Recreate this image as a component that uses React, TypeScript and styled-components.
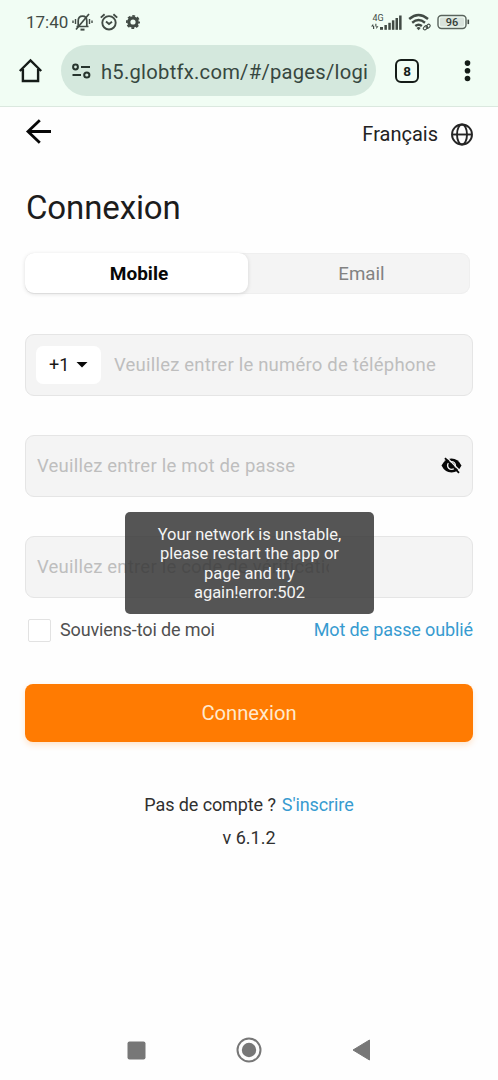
import React from "react";
import styled, { createGlobalStyle } from "styled-components";

const GlobalStyle = createGlobalStyle`
  * { box-sizing: border-box; }
  body { margin: 0; background: #fefefe; font-family: Roboto, "Liberation Sans", sans-serif; }
`;

const Screen = styled.div`
  position: relative;
  display: flex;
  flex-direction: column;
  width: 498px;
  height: 1080px;
  overflow: hidden;
  background: #fefefe;
`;

const BrowserHeader = styled.header`
  height: 107px;
  background: #f1fdf4;
  border-bottom: 1px solid #dbe8df;
`;

const StatusBar = styled.div`
  display: flex;
  justify-content: space-between;
  height: 45px;
  padding: 0 28px 0 26px;
`;

const StatusGroup = styled.div`
  display: flex;
  align-items: center;
  height: 44px;
`;

const Clock = styled.span`
  width: 46px;
  font-size: 17px;
  color: #424b45;
  white-space: nowrap;
`;

const AddressRow = styled.div`
  display: flex;
  align-items: center;
  height: 51px;
  padding: 0 24px 0 18px;
`;

const AddressPill = styled.div`
  display: flex;
  align-items: center;
  width: 315px;
  height: 51px;
  margin-left: 18px;
  padding: 0 9px 0 10px;
  border-radius: 26px;
  background: #d4e8dd;
`;

const Url = styled.span`
  flex: 1;
  margin-left: 9px;
  padding-top: 2px;
  overflow: hidden;
  white-space: nowrap;
  font-size: 20.2px;
  line-height: 28px;
  letter-spacing: 0.25px;
  color: #37473f;
`;

const TabCount = styled.div`
  display: flex;
  align-items: center;
  justify-content: center;
  width: 24px;
  height: 24px;
  margin: 0 0 0 19px;
  border: 2.8px solid #151c18;
  border-radius: 6px;
  font-size: 13.5px;
  font-weight: 700;
  color: #151c18;
`;

const Page = styled.main`
  display: flex;
  flex-direction: column;
  flex: 1;
  padding: 0 25px;
`;

const TopRow = styled.div`
  display: flex;
  justify-content: space-between;
  height: 55px;
`;

const Language = styled.div`
  display: flex;
  align-items: center;
  gap: 12px;
  height: 54px;
  font-size: 20px;
  color: #222;
`;

const Title = styled.h1`
  margin: 24px 0 0;
  height: 43px;
  padding-left: 1px;
  font-size: 33px;
  font-weight: 400;
  letter-spacing: -0.12px;
  line-height: 43px;
  color: #1c1c1c;
`;

const Tabs = styled.div`
  display: flex;
  width: 445px;
  height: 41px;
  margin-top: 24px;
  border-radius: 9px;
  background: #f4f4f4;
  box-shadow: inset 0 0 0 1px #efefef;
`;

const Tab = styled.div<{ $active?: boolean }>`
  display: flex;
  align-items: center;
  justify-content: center;
  width: ${(p) => (p.$active ? 223 : 222)}px;
  height: ${(p) => (p.$active ? 40 : 41)}px;
  padding-left: 5px;
  border-radius: 9px;
  font-size: ${(p) => (p.$active ? 19 : 18.7)}px;
  font-weight: ${(p) => (p.$active ? 700 : 400)};
  color: ${(p) => (p.$active ? "#080808" : "#828282")};
  background: ${(p) => (p.$active ? "#fff" : "transparent")};
  box-shadow: ${(p) => (p.$active ? "0 1px 4px rgba(0,0,0,0.13)" : "none")};
`;

const Field = styled.div<{ $gap: number }>`
  display: flex;
  align-items: center;
  height: 62px;
  margin-top: ${(p) => p.$gap}px;
  padding: 0 10px 1px;
  border: 1px solid #e5e5e5;
  border-radius: 9px;
  background: #f4f4f4;
`;

const Placeholder = styled.span<{ $inset: number; $width?: number }>`
  flex: ${(p) => (p.$width ? `0 0 ${p.$width}px` : "1")};
  overflow: hidden;
  margin-left: ${(p) => p.$inset}px;
  white-space: nowrap;
  font-size: 18.5px;
  letter-spacing: 0.21px;
  color: #bebebe;
`;

const DialCode = styled.div`
  display: flex;
  align-items: center;
  gap: 7px;
  width: 65px;
  height: 38px;
  padding-left: 13px;
  border-radius: 7px;
  background: #fff;
  font-size: 18px;
  color: #181818;
`;

const Options = styled.div`
  display: flex;
  align-items: center;
  height: 26px;
  margin-top: 19px;
  padding-left: 3px;
  font-size: 18px;
  letter-spacing: -0.12px;
  line-height: 25px;
  color: #505050;
  white-space: nowrap;
`;

const OptionLabel = styled.span`
  padding-bottom: 1px;
`;

const Checkbox = styled.span`
  width: 23px;
  height: 23px;
  margin-right: 9px;
  border: 1px solid #e2e2e2;
  border-radius: 2px;
  background: #fff;
`;

const Link = styled.a`
  color: #379bd0;
`;

const ForgotLink = styled(Link)`
  margin-left: auto;
  padding-bottom: 1px;
`;

const SubmitButton = styled.button`
  height: 58px;
  margin: 41px 0 0;
  padding: 0;
  border: 0;
  border-radius: 8px;
  background: #ff7b02;
  box-shadow: 0 3px 6px rgba(255, 123, 2, 0.2);
  font-family: inherit;
  font-size: 20.2px;
  color: #ffe9cd;
`;

const Signup = styled.div`
  display: flex;
  justify-content: center;
  gap: 6px;
  margin-top: 49px;
  font-size: 18px;
  letter-spacing: -0.1px;
  line-height: 27px;
  color: #303030;
`;

const Version = styled.div`
  margin-top: 7px;
  text-align: center;
  font-size: 18px;
  line-height: 26px;
  color: #303030;
`;

const SystemNav = styled.nav`
  display: flex;
  align-items: center;
  justify-content: space-between;
  height: 60px;
  padding: 0 127px;
`;

const Toast = styled.div`
  position: absolute;
  left: 125px;
  top: 512px;
  display: flex;
  flex-direction: column;
  align-items: center;
  width: 249px;
  height: 102px;
  padding-top: 13px;
  border-radius: 5px;
  background: rgba(50, 50, 50, 0.83);
  font-size: 16.5px;
  line-height: 19.4px;
  color: #f4f4f4;
  white-space: nowrap;
`;

const MutedBell = () => (
  <svg width="21" height="20" viewBox="0 0 21 20" fill="none" stroke="#424b45" strokeWidth="1.7">
    <path d="M4.5 14.5h12M6.2 14V9q0-4.8 4.3-4.8T14.8 9v5" />
    <path d="M8.5 17.6h4" strokeWidth="2" />
    <path d="M4 17.5 17 2" />
    <path d="M3.5 7v5M1 8.5v2.5M17.5 7v5M20 8.5v2.5" strokeWidth="1.4" />
  </svg>
);

const Alarm = () => (
  <svg width="18" height="18" viewBox="0 0 18 18" fill="none" stroke="#424b45" strokeWidth="1.9">
    <circle cx="9" cy="9.8" r="6.7" />
    <path d="M.8 4.6 4.6 1.3M17.2 4.6 13.4 1.3M6 8.5l3 2.5 3-2.3" />
  </svg>
);

const Gear = () => (
  <svg width="14" height="14" viewBox="0 0 14 14" fill="none" stroke="#424b45">
    <circle cx="7" cy="7" r="4.2" strokeWidth="3.2" />
    <circle cx="7" cy="7" r="6.1" strokeWidth="1.8" strokeDasharray="2.8 1.99" strokeDashoffset="1.4" />
  </svg>
);

const Signal = () => (
  <svg width="33" height="20" viewBox="0 0 33 20" fill="#424b45">
    <text x="1.5" y="8.5" fontSize="9" fontFamily="Roboto, sans-serif">4G</text>
    <path d="m0 14.5 2.2-2.7v2h1V17H2v-2.5zM7.5 14.2 5.3 17v-2.5h-1v-2.7h1.1v2.4z" />
    <rect x="9" y="15" width="3" height="2.8" />
    <rect x="13.4" y="13" width="2.5" height="4.8" />
    <rect x="17.3" y="10.8" width="2.5" height="7" />
    <rect x="20.9" y="8.3" width="2.5" height="9.5" />
    <rect x="24.5" y="6" width="2.5" height="11.8" />
    <rect x="28.1" y="3.5" width="2.5" height="14.3" />
  </svg>
);

const Wifi = () => (
  <svg width="24" height="18" viewBox="0 0 24 18" fill="none" stroke="#424b45" strokeWidth="2.4">
    <path d="M1.2 6q9.3-8 18.8 0M4.2 9.7q6.3-5.2 12.8 0M7.3 13q3.3-2.5 6.6 0" />
    <path d="m8.5 14.9 2.1 2.3 2.1-2.3q-2.1-1.6-4.2 0" fill="#424b45" stroke="none" />
    <g strokeWidth="1.1" transform="rotate(-45 19 14)">
      <rect x="15" y="12" width="4.6" height="3" rx="1.5" />
      <rect x="18" y="12.8" width="4.6" height="3" rx="1.5" />
    </g>
  </svg>
);

const Battery = () => (
  <svg width="33" height="16" viewBox="0 0 33 16">
    <rect x="1" y="1.5" width="28" height="13" rx="3.5" fill="none" stroke="#59635c" strokeWidth="1.4" />
    <rect x="3" y="3.5" width="24" height="9" rx="1.5" fill="#d9e3dc" />
    <path d="M31.3 5.6v4.5" stroke="#424b45" strokeWidth="1.6" />
    <text x="15" y="11.9" textAnchor="middle" fontSize="11" fontWeight="500" fontFamily="Roboto, sans-serif" fill="#343d37">96</text>
  </svg>
);

const HomeIcon = () => (
  <svg width="25" height="25" viewBox="0 0 25 25" fill="none" stroke="#151c18" strokeWidth="2.4">
    <path d="M1.8 13 12.5 2.5 23.2 13M4.9 11v12h15.2V11" />
  </svg>
);

const SiteControls = () => (
  <svg width="21" height="16" viewBox="0 0 21 16" fill="none" stroke="#26342d" strokeWidth="2">
    <circle cx="4.5" cy="4" r="2.4" />
    <path d="M10 4h9M1.5 12H10" />
    <circle cx="15.8" cy="12" r="2.6" />
  </svg>
);

const Dots = styled.svg`
  margin-left: auto;
`;

const BackArrow = styled.svg`
  margin-top: 11px;
`;

const Globe = () => (
  <svg width="23" height="23" viewBox="0 0 23 23" fill="none" stroke="#252525" strokeWidth="1.9">
    <circle cx="12" cy="11.5" r="10" />
    <ellipse cx="12" cy="11.5" rx="5" ry="10" />
    <path d="M2 11.5h20" />
  </svg>
);

const HiddenEye = () => (
  <svg width="21" height="17" viewBox="0 0 21 17">
    <path d="M.5 8.5Q4 1.5 10.5 1.5t10 7q-3.5 7-10 7T.5 8.5" fill="#080808" />
    <circle cx="10.5" cy="8.5" r="3.9" fill="none" stroke="#f4f4f4" strokeWidth="1.4" />
    <path d="M5.5 0 19.8 14.8" stroke="#f4f4f4" strokeWidth="1.3" />
    <path d="M4 1.2 18 15.8" stroke="#080808" strokeWidth="1.8" />
  </svg>
);

export default function App() {
  return (
    <Screen>
      <GlobalStyle />
      <BrowserHeader>
        <StatusBar>
          <StatusGroup>
            <Clock>17:40</Clock>
            <MutedBell />
            <svg width="7" height="1" />
            <Alarm />
            <svg width="8" height="1" />
            <Gear />
          </StatusGroup>
          <StatusGroup>
            <Signal />
            <svg width="4" height="1" />
            <Wifi />
            <svg width="5" height="1" />
            <Battery />
          </StatusGroup>
        </StatusBar>
        <AddressRow>
          <HomeIcon />
          <AddressPill>
            <SiteControls />
            <Url>h5.globtfx.com/#/pages/login</Url>
          </AddressPill>
          <TabCount>8</TabCount>
          <Dots width="14" height="22" viewBox="0 0 14 22" fill="#151c18">
            <circle cx="7.5" cy="3.1" r="2.8" />
            <circle cx="7.5" cy="10.8" r="2.8" />
            <circle cx="7.5" cy="18.5" r="2.8" />
          </Dots>
        </AddressRow>
      </BrowserHeader>
      <Page>
        <TopRow>
          <BackArrow width="27" height="27" viewBox="0 0 27 27" fill="none" stroke="#080808" strokeWidth="2.8">
            <path d="M14.8 2.2 3 13.5l11.8 11.3M2.5 13.5H26" />
          </BackArrow>
          <Language>
            Français
            <Globe />
          </Language>
        </TopRow>
        <Title>Connexion</Title>
        <Tabs>
          <Tab $active>Mobile</Tab>
          <Tab>Email</Tab>
        </Tabs>
        <Field $gap={40}>
          <DialCode>
            +1
            <svg width="12" height="7" viewBox="0 0 12 7"><path d="M.5 1h11L6 6.5z" fill="#080808" /></svg>
          </DialCode>
          <Placeholder $inset={13}>Veuillez entrer le numéro de téléphone</Placeholder>
        </Field>
        <Field $gap={39}>
          <Placeholder $inset={1}>Veuillez entrer le mot de passe</Placeholder>
          <HiddenEye />
        </Field>
        <Field $gap={39}>
          <Placeholder $inset={1} $width={292}>Veuillez entrer le code de vérification</Placeholder>
        </Field>
        <Options>
          <Checkbox />
          <OptionLabel>Souviens-toi de moi</OptionLabel>
          <ForgotLink>Mot de passe oublié</ForgotLink>
        </Options>
        <SubmitButton>Connexion</SubmitButton>
        <Signup>
          <span>Pas de compte ?</span>
          <Link>S'inscrire</Link>
        </Signup>
        <Version>v 6.1.2</Version>
      </Page>
      <SystemNav>
        <svg width="19" height="19" viewBox="0 0 19 19"><rect x=".5" y=".5" width="18" height="18" rx="2" fill="#777" /></svg>
        <svg width="26" height="26" viewBox="0 0 26 26"><circle cx="13" cy="13" r="11.5" fill="none" stroke="#777" strokeWidth="2" /><circle cx="13" cy="13" r="7.2" fill="#777" /></svg>
        <svg width="19" height="22" viewBox="0 0 19 22"><path d="M17.5 1v20L1 11z" fill="#777" stroke="#777" strokeLinejoin="round" /></svg>
      </SystemNav>
      <Toast>
        <span>Your network is unstable,</span>
        <span>please restart the app or</span>
        <span>page and try</span>
        <span>again!error:502</span>
      </Toast>
    </Screen>
  );
}
